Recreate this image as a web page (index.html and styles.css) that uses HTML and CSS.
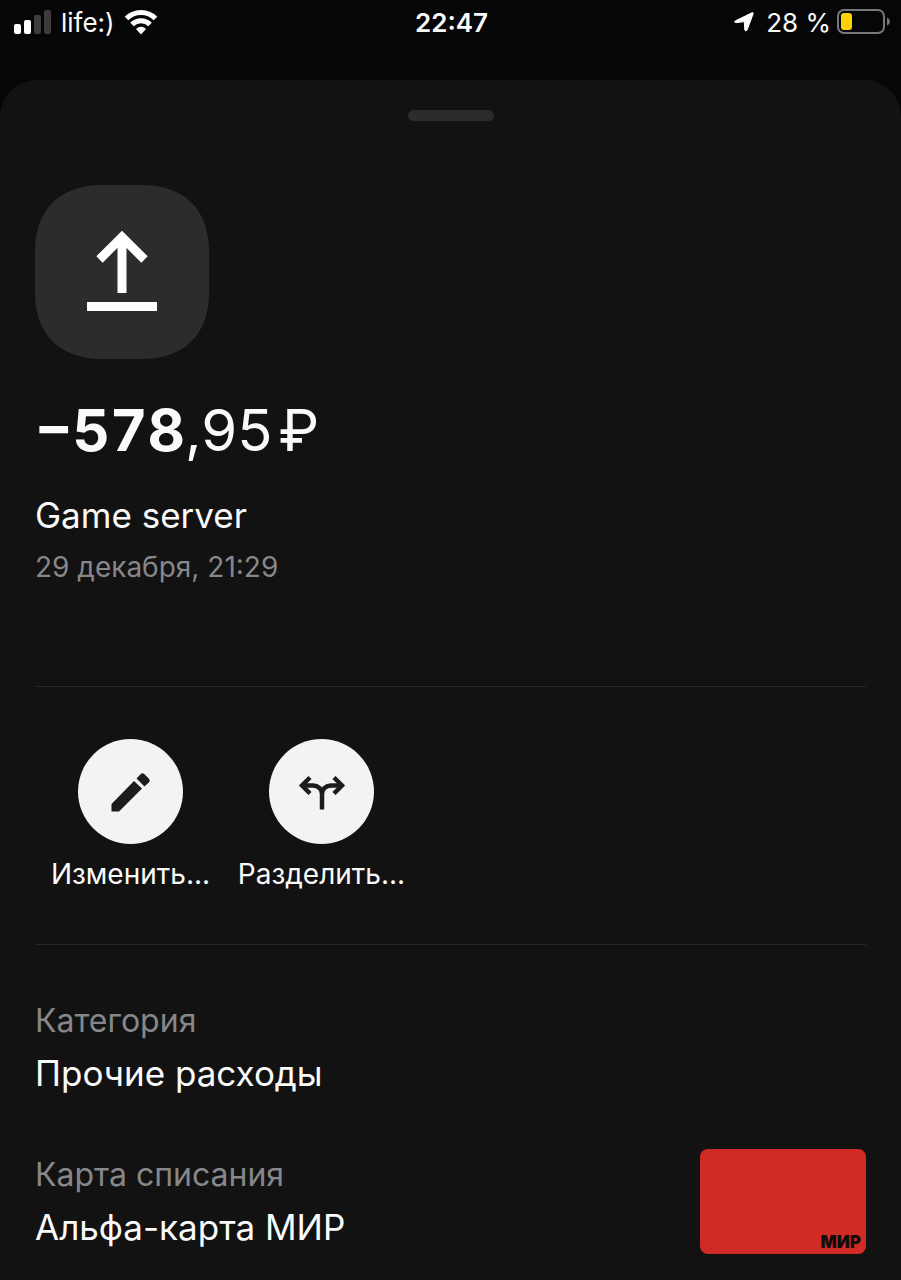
FILE: index.html
```
<!DOCTYPE html>
<html lang="ru">

<head>
    <meta charset="UTF-8">
    <meta name="viewport" content="width=device-width, initial-scale=1.0">
    <title>Game server</title>
    <link rel="stylesheet" href="styles.css">
</head>

<body>
    <header class="status-bar">
        <div class="status-left">
            <svg class="signal" width="38" height="24" viewBox="0 0 38 24">
                <rect x="0" y="14" width="7" height="10" rx="2" fill="#fff"/>
                <rect x="10" y="10" width="7" height="14" rx="2" fill="#fff"/>
                <rect x="20" y="5" width="7" height="19" rx="2" fill="#3c3c3e"/>
                <rect x="30" y="0" width="7" height="24" rx="2" fill="#3c3c3e"/>
            </svg>
            <span>life:)</span>
            <svg class="wifi" width="34" height="26" viewBox="0 0 34 26">
                <path d="M2.500 9.500A20.500 20.500 0 0 1 31.500 9.500" fill="none" stroke="#fff" stroke-width="5"/>
                <path d="M8 15.500A12.500 12.500 0 0 1 26 15.500" fill="none" stroke="#fff" stroke-width="5"/>
                <path d="M12 20Q17 15.500 22 20L17 25.500Z" fill="#fff"/>
            </svg>
        </div>
        <time class="clock">22:47</time>
        <div class="status-right">
            <svg width="20" height="20" viewBox="0 0 20 20">
                <path d="M1.500 8.800L18 .8Q19.600 .2 19.100 1.900L13 18.200Q11.800 19.800 10.800 18L10.400 10.500Q10.300 9.800 9.500 9.800L1.800 10.600Q-.5 10 1.500 8.800Z" fill="#fff" stroke="#fff"/>
            </svg>
            <span>28 %</span>
            <svg class="battery" width="54" height="26" viewBox="0 0 54 26">
                <rect x="1" y="1" width="46" height="23" rx="6" fill="none" stroke="#77777a" stroke-width="2"/>
                <rect x="4" y="4" width="11" height="17" rx="3" fill="#fdd20a"/>
                <path d="M50 8.500Q53 10 53 12.500T50 16.500Z" fill="#77777a"/>
            </svg>
        </div>
    </header>

    <main class="sheet">
        <div class="handle"></div>

        <section class="operation">
            <svg class="operation-icon" width="174" height="174" viewBox="0 0 174 174">
                <path d="M0 68C0 24 24 0 68 0H106C150 0 174 24 174 68V106C174 150 150 174 106 174H68C24 174 0 150 0 106Z" fill="#2c2c2e"/>
                <path d="M87 108V54M64.500 74.500L87 52L109.500 74.500" fill="none" stroke="#fff" stroke-width="9"/>
                <path d="M52 121.500H122" stroke="#fff" stroke-width="9"/>
            </svg>
            <h1 class="amount"><b>−578</b>,95<span class="currency">₽</span></h1>
            <p class="value">Game server</p>
            <p class="date">29 декабря, 21:29</p>
        </section>

        <section class="actions">
            <button class="action">
                <span class="action-circle">
                    <svg width="52" height="52" viewBox="0 0 52 52">
                        <path d="M6.500 38L29 15L37 22.500L14 45.500H7Q6.500 45.500 6.500 45Z" fill="#1c1c1e"/>
                        <path d="M31.500 12.500L35.800 8Q37.500 6.500 39.200 8L44 12.800Q45.500 14.500 44 16.200L39.500 20.500Z" fill="#1c1c1e"/>
                    </svg>
                </span>
                Изменить...
            </button>
            <button class="action">
                <span class="action-circle">
                    <svg width="52" height="52" viewBox="0 0 52 52" fill="none" stroke="#1c1c1e" stroke-width="4.500">
                        <path d="M26 43.500V28C26 23 22 19.500 17 19.500H7M26 28C26 23 30 19.500 35 19.500H45"/>
                        <path d="M14 11.500L6 19.500L14 27.500M38 11.500L46 19.500L38 27.500"/>
                    </svg>
                </span>
                Разделить...
            </button>
        </section>

        <section class="details">
            <div class="detail">
                <div>
                    <p class="label">Категория</p>
                    <p class="value">Прочие расходы</p>
                </div>
            </div>
            <div class="detail">
                <div>
                    <p class="label">Карта списания</p>
                    <p class="value">Альфа-карта МИР</p>
                </div>
                <div class="card">МИР</div>
            </div>
        </section>
    </main>
</body>

</html>
```
FILE: styles.css
```
* {
    box-sizing: border-box;
}

body {
    margin: 0;
    min-height: 100vh;
    display: flex;
    flex-direction: column;
    background-color: #060608;
    color: #fafafa;
    font-family: 'Inter', sans-serif;
}

h1,
p {
    margin: 0;
    font-weight: 400;
}

.status-bar {
    display: grid;
    grid-template-columns: 1fr auto 1fr;
    align-items: center;
    height: 44px;
    margin-bottom: 36px;
    padding: 0 12px 0 14px;
    font-size: 26px;
}

.status-left,
.status-right {
    display: flex;
    align-items: center;
    gap: 9px;
}

.status-right {
    justify-content: flex-end;
    gap: 12px;
}

.battery {
    margin: 0 -2px 0 -6px;
}

.clock {
    font-weight: 600;
}

.sheet {
    flex: 1;
    padding: 30px 35px 24px;
    border-radius: 36px 36px 0 0;
    background-color: #121212;
}

.handle {
    width: 86px;
    height: 11px;
    margin: 0 auto 64px;
    border-radius: 6px;
    background-color: #2c2c2e;
}

.operation {
    padding-bottom: 101px;
    border-bottom: 1px solid #262628;
}

.operation-icon {
    display: block;
}

.amount {
    margin: 36px 0 28px;
    font-size: 58px;
    line-height: 70px;
}

.amount b {
    font-variant-numeric: tabular-nums;
}

.currency {
    margin-left: 6px;
}

.value {
    font-size: 35px;
    line-height: 44px;
}

.date {
    margin-top: 12px;
    color: #87878a;
    font-size: 28px;
    line-height: 36px;
}

.actions {
    display: flex;
    padding: 52px 0;
    border-bottom: 1px solid #262628;
}

.action {
    display: flex;
    flex-direction: column;
    align-items: center;
    gap: 12px;
    width: 191px;
    padding: 0;
    border: none;
    background: none;
    color: inherit;
    font-family: inherit;
    font-size: 28px;
    line-height: 36px;
    cursor: pointer;
}

.action-circle {
    display: flex;
    align-items: center;
    justify-content: center;
    width: 105px;
    height: 105px;
    border-radius: 50%;
    background-color: #f3f3f3;
}

.details {
    display: flex;
    flex-direction: column;
    gap: 54px;
    padding-top: 56px;
}

.detail {
    display: flex;
    align-items: center;
    justify-content: space-between;
}

.label {
    margin-bottom: 10px;
    color: #87878a;
    font-size: 32px;
    line-height: 40px;
}

.card {
    display: flex;
    align-items: flex-end;
    justify-content: flex-end;
    width: 166px;
    height: 105px;
    padding: 2px 5px;
    border-radius: 8px;
    background-color: #d02b24;
    color: #120c0c;
    font-size: 17px;
    font-weight: 900;
    line-height: 20px;
}
```
